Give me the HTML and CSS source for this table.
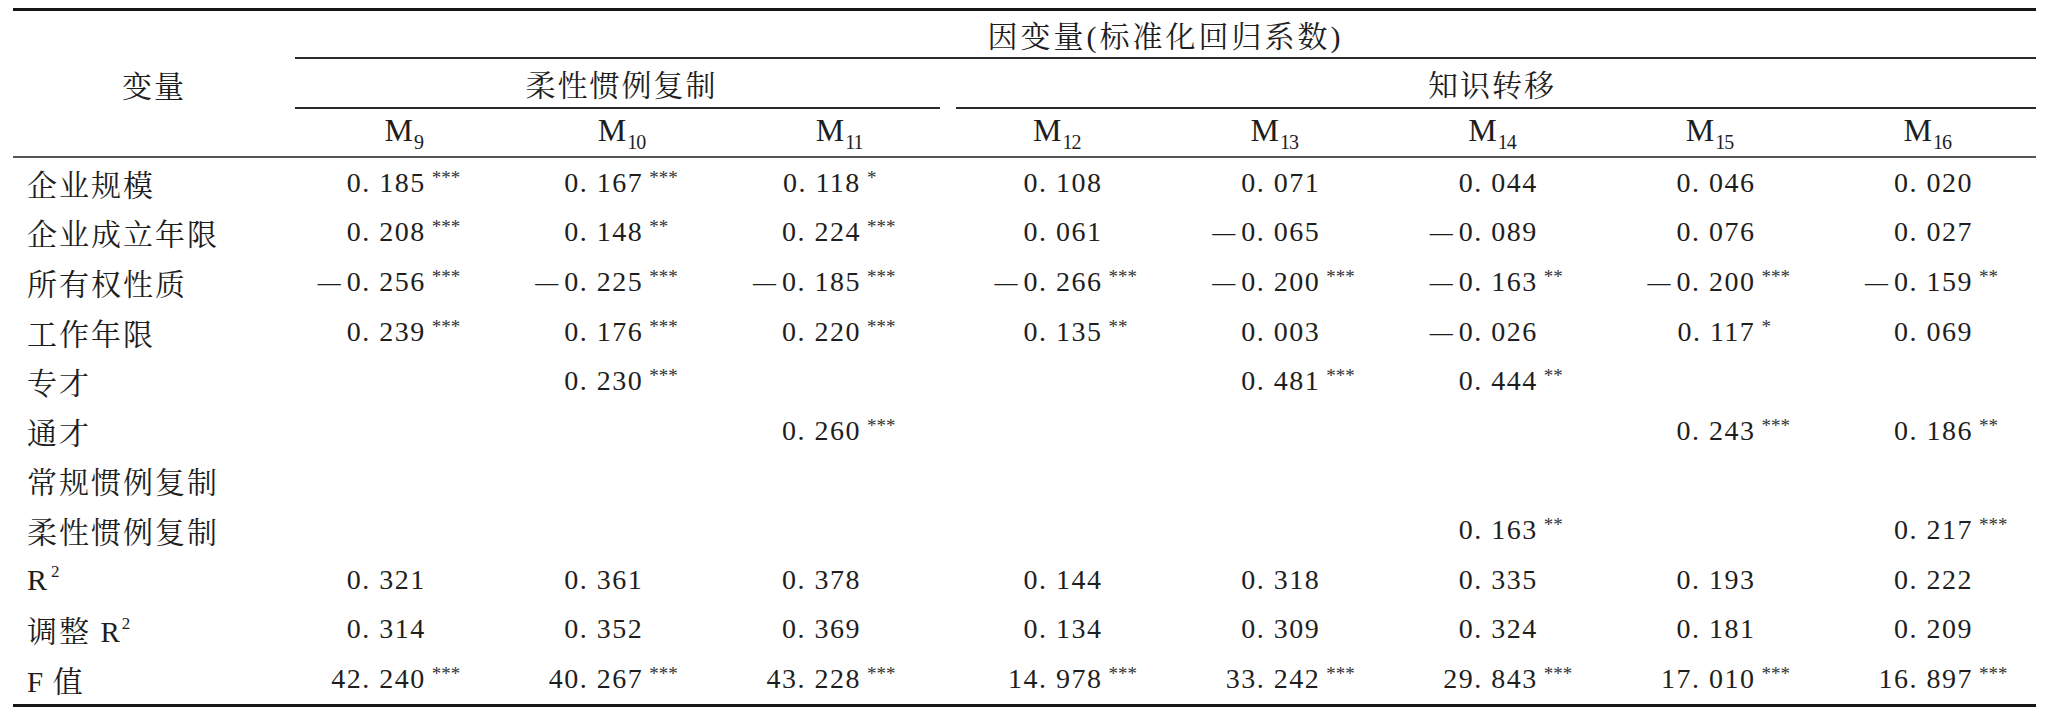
FILE: index.html
```html
<!DOCTYPE html>
<html lang="zh-CN">
<head>
<meta charset="utf-8">
<title>回归结果</title>
<link rel="stylesheet" href="styles.css">
</head>
<body>
<table class="tbl">
  <colgroup>
    <col class="c-var">
    <col><col><col><col><col><col><col><col>
  </colgroup>
  <thead>
    <tr class="h1">
      <th class="var" rowspan="3">变量</th>
      <th class="dep" colspan="8">因变量(标准化回归系数)</th>
    </tr>
    <tr class="h2">
      <th class="grp g1" colspan="3">柔性惯例复制</th>
      <th class="grp g2" colspan="5">知识转移</th>
    </tr>
    <tr class="h3">
      <th class="m">M<sub>9</sub></th>
      <th class="m">M<sub>10</sub></th>
      <th class="m">M<sub>11</sub></th>
      <th class="m">M<sub>12</sub></th>
      <th class="m">M<sub>13</sub></th>
      <th class="m">M<sub>14</sub></th>
      <th class="m">M<sub>15</sub></th>
      <th class="m">M<sub>16</sub></th>
    </tr>
  </thead>
  <tbody>
    <tr>
      <td class="lab">企业规模</td>
      <td>0. 185<sup>***</sup></td>
      <td>0. 167<sup>***</sup></td>
      <td>0. 118<sup>*</sup></td>
      <td>0. 108<sup></sup></td>
      <td>0. 071<sup></sup></td>
      <td>0. 044<sup></sup></td>
      <td>0. 046<sup></sup></td>
      <td>0. 020<sup></sup></td>
    </tr>
    <tr>
      <td class="lab">企业成立年限</td>
      <td>0. 208<sup>***</sup></td>
      <td>0. 148<sup>**</sup></td>
      <td>0. 224<sup>***</sup></td>
      <td>0. 061<sup></sup></td>
      <td><span class="neg">—</span>0. 065<sup></sup></td>
      <td><span class="neg">—</span>0. 089<sup></sup></td>
      <td>0. 076<sup></sup></td>
      <td>0. 027<sup></sup></td>
    </tr>
    <tr>
      <td class="lab">所有权性质</td>
      <td><span class="neg">—</span>0. 256<sup>***</sup></td>
      <td><span class="neg">—</span>0. 225<sup>***</sup></td>
      <td><span class="neg">—</span>0. 185<sup>***</sup></td>
      <td><span class="neg">—</span>0. 266<sup>***</sup></td>
      <td><span class="neg">—</span>0. 200<sup>***</sup></td>
      <td><span class="neg">—</span>0. 163<sup>**</sup></td>
      <td><span class="neg">—</span>0. 200<sup>***</sup></td>
      <td><span class="neg">—</span>0. 159<sup>**</sup></td>
    </tr>
    <tr>
      <td class="lab">工作年限</td>
      <td>0. 239<sup>***</sup></td>
      <td>0. 176<sup>***</sup></td>
      <td>0. 220<sup>***</sup></td>
      <td>0. 135<sup>**</sup></td>
      <td>0. 003<sup></sup></td>
      <td><span class="neg">—</span>0. 026<sup></sup></td>
      <td>0. 117<sup>*</sup></td>
      <td>0. 069<sup></sup></td>
    </tr>
    <tr>
      <td class="lab">专才</td>
      <td></td>
      <td>0. 230<sup>***</sup></td>
      <td></td>
      <td></td>
      <td>0. 481<sup>***</sup></td>
      <td>0. 444<sup>**</sup></td>
      <td></td>
      <td></td>
    </tr>
    <tr>
      <td class="lab">通才</td>
      <td></td>
      <td></td>
      <td>0. 260<sup>***</sup></td>
      <td></td>
      <td></td>
      <td></td>
      <td>0. 243<sup>***</sup></td>
      <td>0. 186<sup>**</sup></td>
    </tr>
    <tr>
      <td class="lab">常规惯例复制</td>
      <td></td><td></td><td></td><td></td><td></td><td></td><td></td><td></td>
    </tr>
    <tr>
      <td class="lab">柔性惯例复制</td>
      <td></td>
      <td></td>
      <td></td>
      <td></td>
      <td></td>
      <td>0. 163<sup>**</sup></td>
      <td></td>
      <td>0. 217<sup>***</sup></td>
    </tr>
    <tr>
      <td class="lab lat">R<span class="sq">2</span></td>
      <td>0. 321<sup></sup></td>
      <td>0. 361<sup></sup></td>
      <td>0. 378<sup></sup></td>
      <td>0. 144<sup></sup></td>
      <td>0. 318<sup></sup></td>
      <td>0. 335<sup></sup></td>
      <td>0. 193<sup></sup></td>
      <td>0. 222<sup></sup></td>
    </tr>
    <tr>
      <td class="lab">调整 <span class="lat">R<span class="sq">2</span></span></td>
      <td>0. 314<sup></sup></td>
      <td>0. 352<sup></sup></td>
      <td>0. 369<sup></sup></td>
      <td>0. 134<sup></sup></td>
      <td>0. 309<sup></sup></td>
      <td>0. 324<sup></sup></td>
      <td>0. 181<sup></sup></td>
      <td>0. 209<sup></sup></td>
    </tr>
    <tr>
      <td class="lab"><span class="lat">F</span> 值</td>
      <td>42. 240<sup>***</sup></td>
      <td>40. 267<sup>***</sup></td>
      <td>43. 228<sup>***</sup></td>
      <td>14. 978<sup>***</sup></td>
      <td>33. 242<sup>***</sup></td>
      <td>29. 843<sup>***</sup></td>
      <td>17. 010<sup>***</sup></td>
      <td>16. 897<sup>***</sup></td>
    </tr>
  </tbody>
</table>
</body>
</html>
```
FILE: styles.css
```css
html, body {
  margin: 0;
  padding: 0;
  background: #ffffff;
}

.tbl {
  margin: 8px 0 0 13px;
  width: 2023px;
  table-layout: fixed;
  border-collapse: separate;
  border-spacing: 0;
  border-top: 3px solid #161616;
  border-bottom: 3px solid #161616;
  font-family: "Liberation Serif", "Noto Serif CJK SC", "Noto Sans CJK SC", serif;
  font-size: 28px;
  color: #1e1e1e;
}

.c-var {
  width: 282px;
}

th {
  font-weight: normal;
  padding: 0;
}

td {
  padding: 0;
}

/* header */
.h1 th {
  height: 46px;
}

.h2 th {
  height: 48px;
}

.h3 th {
  height: 47px;
}

.var {
  font-size: 30px;
  letter-spacing: 2px;
  text-align: center;
  vertical-align: middle;
  border-bottom: 2px solid #555555;
}

.dep {
  font-size: 30px;
  letter-spacing: 3px;
  border-bottom: 2px solid #2a2a2a;
  text-align: center;
}

.grp {
  font-size: 30px;
  letter-spacing: 2px;
  text-align: center;
  padding-bottom: 2px;
  background-repeat: no-repeat;
  background-size: calc(100% - 8px) 2px;
  background-image: linear-gradient(#2a2a2a, #2a2a2a);
}

.g1 {
  background-position: left bottom;
}

.g2 {
  background-position: right bottom;
}

.m {
  font-size: 32px;
  text-align: center;
  border-bottom: 2px solid #555555;
}

.m sub {
  font-size: 20px;
  vertical-align: -8px;
  margin-left: 1px;
  letter-spacing: -1px;
}

/* body */
tbody tr {
  height: 49.6px;
}

tbody td {
  text-align: right;
  padding-right: 47px;
  white-space: nowrap;
  letter-spacing: 1.5px;
  vertical-align: middle;
}

tbody td:nth-child(n+5) {
  padding-right: 23px;
}

tbody td sup {
  display: inline-block;
  width: 34px;
  padding-left: 6px;
  text-align: left;
  font-size: 19px;
  letter-spacing: 0;
  vertical-align: 8px;
  line-height: 1;
  color: #333333;
}

.neg {
  font-size: 23px;
  letter-spacing: 0;
  margin-right: 6px;
  vertical-align: 1px;
}

tbody td.lab {
  text-align: left;
  padding: 0 0 0 14px;
  font-size: 30px;
  letter-spacing: 2px;
}

.lat {
  font-family: "Liberation Serif", serif;
  font-size: 29px;
  letter-spacing: 0;
}

.sq {
  font-size: 17px;
  vertical-align: 13px;
  margin-left: 2px;
}
```
